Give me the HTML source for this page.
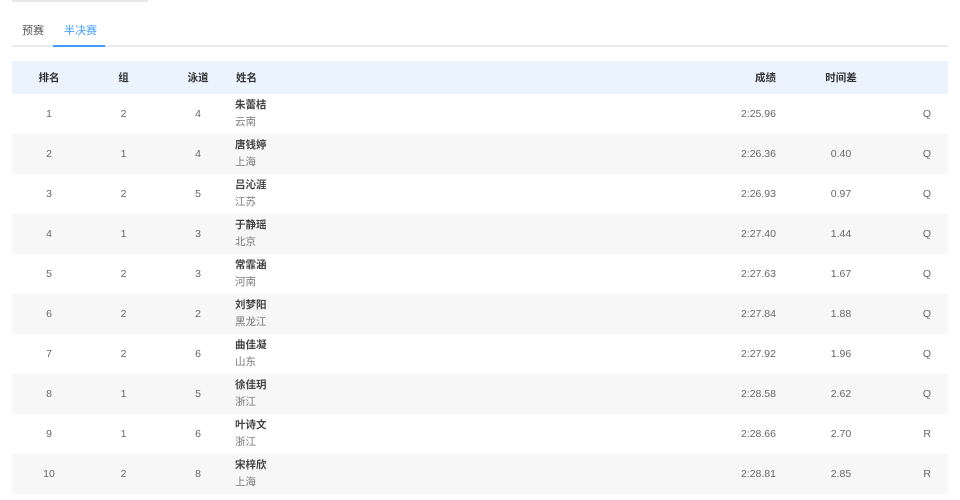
<!DOCTYPE html><html><head><meta charset="utf-8"><style>
body{margin:0;width:960px;height:500px;background:#fff;font-family:"Liberation Sans","Noto Sans CJK SC",sans-serif;color:#606266;position:relative;overflow:hidden}
.topbar{position:absolute;left:12px;top:0;width:136px;height:2px;background:#e8e8e8}
.tabs{position:absolute;left:12px;top:12px;width:936px;height:35px;border-bottom:2px solid #e9ebef;box-sizing:border-box}
.tab{position:absolute;top:10px;font-size:11px}
.ul{position:absolute;left:41px;top:33px;width:52px;height:2px;background:#409eff}
table{position:absolute;left:12px;top:61px;width:936px;border-collapse:collapse;font-size:10.5px}
th{height:33px;background:#eaf3fe;color:#333;font-weight:bold;padding:0}
td{height:40px;padding:0;color:#666}
tr.e td{background:#f7f7f7}
.c{text-align:center}.l{text-align:left}.r{text-align:right}
.n{line-height:17px;color:#444;font-weight:bold}.p{line-height:17px;color:#777}
</style></head><body>
<div class="topbar"></div>
<div class="tabs"><span class="tab" style="left:10px;color:#555">预赛</span><span class="tab" style="left:52px;color:#409eff">半决赛</span><div class="ul"></div></div>
<table>
<colgroup><col style="width:74px"><col style="width:75px"><col style="width:74px"><col style="width:470px"><col style="width:71px"><col style="width:130px"><col></colgroup>
<tr><th>排名</th><th>组</th><th>泳道</th><th class="l" style="padding-left:1px">姓名</th><th class="r">成绩</th><th class="c">时间差</th><th></th></tr>
<tr><td class="c">1</td><td class="c">2</td><td class="c">4</td><td><div class="n">朱蕾桔</div><div class="p">云南</div></td><td class="r">2:25.96</td><td class="c"></td><td class="r" style="padding-right:17px">Q</td></tr>
<tr class="e"><td class="c">2</td><td class="c">1</td><td class="c">4</td><td><div class="n">唐钱婷</div><div class="p">上海</div></td><td class="r">2:26.36</td><td class="c">0.40</td><td class="r" style="padding-right:17px">Q</td></tr>
<tr><td class="c">3</td><td class="c">2</td><td class="c">5</td><td><div class="n">吕沁涯</div><div class="p">江苏</div></td><td class="r">2:26.93</td><td class="c">0.97</td><td class="r" style="padding-right:17px">Q</td></tr>
<tr class="e"><td class="c">4</td><td class="c">1</td><td class="c">3</td><td><div class="n">于静瑶</div><div class="p">北京</div></td><td class="r">2:27.40</td><td class="c">1.44</td><td class="r" style="padding-right:17px">Q</td></tr>
<tr><td class="c">5</td><td class="c">2</td><td class="c">3</td><td><div class="n">常霏涵</div><div class="p">河南</div></td><td class="r">2:27.63</td><td class="c">1.67</td><td class="r" style="padding-right:17px">Q</td></tr>
<tr class="e"><td class="c">6</td><td class="c">2</td><td class="c">2</td><td><div class="n">刘梦阳</div><div class="p">黑龙江</div></td><td class="r">2:27.84</td><td class="c">1.88</td><td class="r" style="padding-right:17px">Q</td></tr>
<tr><td class="c">7</td><td class="c">2</td><td class="c">6</td><td><div class="n">曲佳凝</div><div class="p">山东</div></td><td class="r">2:27.92</td><td class="c">1.96</td><td class="r" style="padding-right:17px">Q</td></tr>
<tr class="e"><td class="c">8</td><td class="c">1</td><td class="c">5</td><td><div class="n">徐佳玥</div><div class="p">浙江</div></td><td class="r">2:28.58</td><td class="c">2.62</td><td class="r" style="padding-right:17px">Q</td></tr>
<tr><td class="c">9</td><td class="c">1</td><td class="c">6</td><td><div class="n">叶诗文</div><div class="p">浙江</div></td><td class="r">2:28.66</td><td class="c">2.70</td><td class="r" style="padding-right:17px">R</td></tr>
<tr class="e"><td class="c">10</td><td class="c">2</td><td class="c">8</td><td><div class="n">宋梓欣</div><div class="p">上海</div></td><td class="r">2:28.81</td><td class="c">2.85</td><td class="r" style="padding-right:17px">R</td></tr>
</table>
</body></html>
